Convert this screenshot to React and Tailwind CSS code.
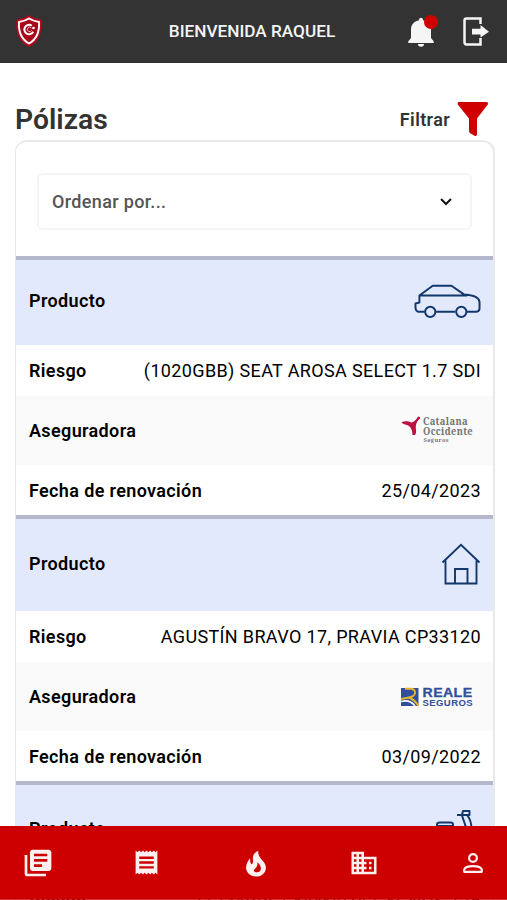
import React from 'react';
import { MdLibraryBooks, MdReceipt, MdBusiness } from 'react-icons/md';

const ShieldLogo = () => (
    <svg viewBox="0 0 28 34" className="w-7 h-[34px]">
        <path d="M14 1C10 4 5 5 1.500 5.500C.5 15 2 27 14 33C26 27 27.500 15 26.500 5.500C23 5 18 4 14 1Z" fill="#b8071b" />
        <path d="M14 4.500C11 6.500 7 7.500 4 8C3.500 16 6 25 14 29.500C22 25 24.500 16 24 8C21 7.500 17 6.500 14 4.500Z" fill="#a80619" stroke="#fff" strokeWidth="1.900" />
        <path d="M16.800 11.700A4.700 4.700 0 1 0 18.200 17.800" fill="none" stroke="#fff" strokeWidth="2" />
        <path d="M16.300 14A2.200 2.200 0 1 0 16.600 16.300" fill="none" stroke="#f3b9bf" strokeWidth="1" />
        <circle cx="18.500" cy="14" r="1.300" fill="#fff" />
    </svg>
);

const BellIcon = () => (
    <svg viewBox="0 0 26 31" className="w-[26px] h-[31px]" fill="#f5f5f5">
        <path d="M13 .8a2 2 0 0 1 2 2v.5c4.900 1 8 4.300 8 9.200v8.500l2.700 3.300v1.700H.3v-1.700l2.700-3.300v-8.500c0-4.900 3.100-8.200 8-9.200v-.5a2 2 0 0 1 2-2z" />
        <path d="M10 27h6a3 2.700 0 0 1-6 0z" />
    </svg>
);

const ExitIcon = () => (
    <svg viewBox="0 0 26 29" className="w-[26px] h-[29px]" fill="none">
        <path d="M17.500 7V1.500H3.500Q1.500 1.500 1.500 3.500V25Q1.500 27.500 3.500 27.500H17.500V21" stroke="#f5f5f5" strokeWidth="2.500" />
        <path d="M9 11.700H17.500V8L26 14.700L17.500 20.500V17.500H9Z" fill="#f5f5f5" />
    </svg>
);

const FunnelIcon = () => (
    <svg viewBox="0 0 32 36" className="w-8 h-9" fill="#d00000">
        <path d="M1.500 1H30Q31.500 1.200 30.800 3.500L20 17.500V33.500Q19.700 35.500 17.500 34.700L13.300 32.300Q12 31.500 12 30V17.500L.8 3.500Q0 1.200 1.500 1Z" />
    </svg>
);

const CarIcon = () => (
    <svg viewBox="0 0 68 34" className="w-[67px] h-[34px]" fill="none" stroke="#12386b" strokeWidth="2" strokeLinejoin="round">
        <path d="M11 28H5Q2 28 1.500 24V19.500L5.500 18.500V11.500L19 1.500H38L51 10.500C59 11 66 13 66.500 18V25Q66 28 63 28H53M42 28H22M6 11.500H54" />
        <circle cx="16.500" cy="28" r="5.200" />
        <circle cx="48" cy="28" r="5.200" />
    </svg>
);

const HouseIcon = () => (
    <svg viewBox="0 0 40 42" className="w-10 h-[42px]" fill="none" stroke="#12386b" strokeWidth="1.900">
        <path d="M1.500 19.500L20 1.800L38.500 19.500M4.500 17.500V40.500H35.500V17.500M14 40V26H26.500V40" />
    </svg>
);

const MotoIcon = () => (
    <svg viewBox="0 0 46 39" className="w-[46px] h-[39px]" fill="none" stroke="#12386b" strokeWidth="2" strokeLinejoin="round">
        <path d="M2 17V15.500Q2 13.500 5 13.500H15.500Q18 13.500 18 15.500V17ZM22 6H27L28 2H34.500V6H27M27 6.500L34 27M32.500 6.500Q36.500 12 36.500 20M4 17V26H24L30 17" />
        <circle cx="10" cy="30" r="4.500" />
        <circle cx="38" cy="30" r="4.500" />
    </svg>
);

const FlameIcon = () => (
    <svg viewBox="0 0 22 28" className="h-[27px] w-[22px]" fill="currentColor">
        <path
            fillRule="evenodd"
            d="M13.300 .8C13 5 14.500 7.300 16.800 9.800C19.500 12.500 21.300 15 21.300 18.300C21.300 23.500 17 27.500 11 27.500S.7 23.500 .7 18C.7 14 3 11 5 8.300C4.800 11.500 5 13.800 6.500 14.800C8 14 8.200 12 7.800 9.800C7.200 6 9.500 2.500 13.300 .8ZM12.300 12.800C12.800 15 12.300 16.500 11.300 17.800C10.500 19 9.300 20 8.700 21C9.200 22.800 10.500 23.300 12 23.200C14.800 23 16.300 21 16 18.500C15.700 16 14 14 12.300 12.800Z"
        />
    </svg>
);

const PersonIcon = () => (
    <svg viewBox="0 0 20 20" className="h-5 w-5" fill="none" stroke="currentColor" strokeWidth="2.200">
        <circle cx="10" cy="5" r="3.900" />
        <path d="M1.200 18.800V16.500C2.500 11.900 17.500 11.900 18.800 16.500V18.800Z" strokeLinejoin="round" />
    </svg>
);

const CatalanaLogo = () => (
    <svg viewBox="0 0 80 38" className="w-20 h-[38px] font-['Noto_Serif','DejaVu_Serif','Liberation_Serif',serif]" fill="#747474">
        <path d="M0.500 10.500C4.500 8.500 7.500 9.500 10.500 10.500C13.500 10 15.500 7 17 4.500Q19.500 4.500 19 6.500C15.500 9.500 14.500 13 14.800 16C15 19 15.500 21 14 23H11.500C11.500 19.500 10.500 16 8 14C5.500 12.500 2.500 12.500 .5 10.500Z" fill="#bd123d" />
        <text x="22" y="13" fontSize="10" fontWeight="bold" textLength="45" lengthAdjust="spacingAndGlyphs">Catalana</text>
        <text x="22" y="23" fontSize="10" fontWeight="bold" textLength="50" lengthAdjust="spacingAndGlyphs">Occidente</text>
        <text x="22.500" y="30" fontSize="6" fontWeight="bold" textLength="25.500" lengthAdjust="spacingAndGlyphs">Seguros</text>
    </svg>
);

const RealeLogo = () => (
    <svg viewBox="0 0 80 38" className="w-20 h-[38px] font-['Liberation_Sans',sans-serif]" fill="#304e9b">
        <rect y="10" width="17.500" height="18" />
        <path d="M4 10.800H10Q14.500 11.500 14 15.500Q13 18.500 8 19.500L0 21M8 19.500Q14 22 17.500 28" fill="none" stroke="#e6b52e" strokeWidth="1.900" />
        <path d="M0 23.500Q9 21 14 28" fill="none" stroke="#fff" strokeWidth="1.600" />
        <text x="21.500" y="19.200" fontSize="12.500" fontWeight="bold" stroke="#304e9b" strokeWidth=".3" textLength="50" lengthAdjust="spacingAndGlyphs">REALE</text>
        <text x="21.500" y="27.800" fontSize="8.500" fontWeight="bold" textLength="50.500" lengthAdjust="spacingAndGlyphs">SEGUROS</text>
    </svg>
);

const policies = [
    { icon: <CarIcon />, height: 'h-[89px]', risk: '(1020GBB) SEAT AROSA SELECT 1.7 SDI', logo: <CatalanaLogo />, date: '25/04/2023' },
    { icon: <HouseIcon />, height: 'h-[96px]', risk: 'AGUSTÍN BRAVO 17, PRAVIA CP33120', logo: <RealeLogo />, date: '03/09/2022' },
    { icon: <MotoIcon />, height: 'h-[94px]', risk: '(1234BBC) YAMAHA CYGNUS 125', logo: <RealeLogo />, date: '12/10/2022' },
];

const Policy = ({ policy }) => (
    <section className="text-lg tracking-[0.02em] text-black">
        <div className={`flex items-center justify-between border-t-4 border-[#b5b8ca] bg-[#e3e9fd] pl-[13px] pr-3 pb-[2px] ${policy.height}`}>
            <span className="font-semibold">Producto</span>
            {policy.icon}
        </div>
        <div className="flex h-[51px] items-center justify-between pt-px pl-[13px] pr-3">
            <span className="font-semibold">Riesgo</span>
            <span>{policy.risk}</span>
        </div>
        <div className="flex h-[69px] items-center justify-between bg-[#fafafa] pt-[2px] pl-[13px] pr-3">
            <span className="font-semibold">Aseguradora</span>
            {policy.logo}
        </div>
        <div className="flex h-[50px] items-center justify-between pt-[2px] pl-[13px] pr-3">
            <span className="font-semibold">Fecha de renovación</span>
            <span>{policy.date}</span>
        </div>
    </section>
);

const App = () => {
    return (
        <div className="relative flex h-[900px] flex-col overflow-hidden bg-white font-[Roboto,sans-serif]">
            <header className="grid h-[62.500px] shrink-0 grid-cols-[1fr_auto_1fr] items-center bg-[#333] pl-[15px] pr-[18px]">
                <ShieldLogo />
                <h1 className="pt-[2px] text-[17.200px] font-medium text-[#f5f5f5]">BIENVENIDA RAQUEL</h1>
                <div className="flex items-center justify-end gap-[29px]">
                    <div className="relative pt-[2px]">
                        <BellIcon />
                        <span className="absolute top-0 left-4 h-3.5 w-3.5 rounded-full bg-[#d00000]" />
                    </div>
                    <ExitIcon />
                </div>
            </header>

            <main className="px-[15px] pr-3">
                <div className="flex h-[77px] items-center justify-between pt-9 pr-[6px]">
                    <h2 className="pt-[3px] text-[28.300px] font-semibold text-[#333]">Pólizas</h2>
                    <button className="flex items-center gap-[7px] text-lg font-semibold tracking-[0.02em] text-[#333]">
                        <span className="pt-[2px]">Filtrar</span>
                        <FunnelIcon />
                    </button>
                </div>

                <div className="w-[480px] overflow-hidden rounded-t-xl border-2 border-l border-[#e9e9e9]">
                    <div className="h-[114px] px-[21px] pt-[31px]">
                        <button className="flex h-[57px] w-full items-center justify-between rounded-md border-2 border-[#f5f5f5] pt-[2px] pl-[13px] pr-[18px] text-lg font-medium tracking-[0.02em] text-[#555]">
                            Ordenar por...
                            <svg viewBox="0 0 12 8" className="h-2 w-3" fill="none" stroke="#111" strokeWidth="2">
                                <path d="M1 1L6 6L11 1" />
                            </svg>
                        </button>
                    </div>
                    {policies.map((policy, i) => (
                        <Policy key={i} policy={policy} />
                    ))}
                </div>
            </main>

            <nav className="absolute inset-x-0 bottom-0 flex h-[74px] items-center justify-between border-b border-[#cd0000]/80 bg-[#cd0000] bg-clip-padding pr-[14px] pl-[18px] text-[#fff0f0]">
                <div className="flex w-10 justify-center"><MdLibraryBooks size={32} /></div>
                <div className="flex w-10 justify-center"><MdReceipt size={29} /></div>
                <div className="flex w-10 justify-center pt-[2px]"><FlameIcon /></div>
                <div className="flex w-10 justify-center"><MdBusiness size={30} /></div>
                <div className="flex w-10 justify-center"><PersonIcon /></div>
            </nav>
        </div>
    );
};

export default App;
